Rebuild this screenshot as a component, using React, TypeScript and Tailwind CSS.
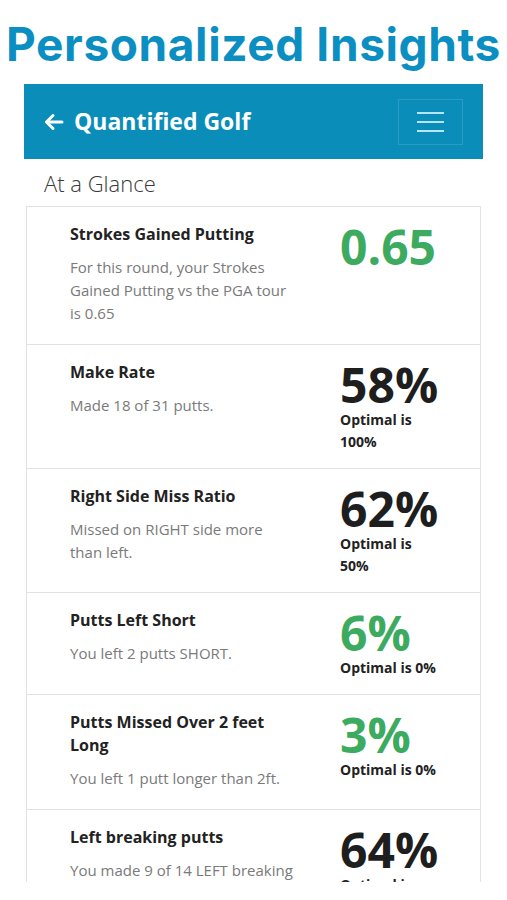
import React from 'react';

interface Insight {
  title: string;
  detail: string;
  value: string;
  good?: boolean;
  optimal?: string;
}

const insights: Insight[] = [
  {
    title: 'Strokes Gained Putting',
    detail: 'For this round, your Strokes Gained Putting vs the PGA tour is 0.65',
    value: '0.65',
    good: true,
  },
  { title: 'Make Rate', detail: 'Made 18 of 31 putts.', value: '58%', optimal: 'Optimal is 100%' },
  {
    title: 'Right Side Miss Ratio',
    detail: 'Missed on RIGHT side more than left.',
    value: '62%',
    optimal: 'Optimal is 50%',
  },
  { title: 'Putts Left Short', detail: 'You left 2 putts SHORT.', value: '6%', good: true, optimal: 'Optimal is 0%' },
  {
    title: 'Putts Missed Over 2 feet Long',
    detail: 'You left 1 putt longer than 2ft.',
    value: '3%',
    good: true,
    optimal: 'Optimal is 0%',
  },
  {
    title: 'Left breaking putts',
    detail: 'You made 9 of 14 LEFT breaking putts.',
    value: '64%',
    optimal: 'Optimal is 50%',
  },
];

const InsightRow: React.FC<{ item: Insight }> = ({ item }) => (
  <div className="flex pl-[43px] pt-4 pb-[15px]">
    <div className="w-[225px] shrink-0">
      <h3 className="text-[16px] leading-[23px] font-bold text-[#222]">{item.title}</h3>
      <p className="mt-[10px] mb-[4px] text-[15px] leading-[23px] text-[#7a7a7a]">{item.detail}</p>
    </div>
    <div className="ml-[45px]">
      <div
        className={`text-[48px] leading-none font-bold ${item.good ? 'text-[#3caa5f]' : 'text-[#1e1e1e]'}`}
      >
        {item.value}
      </div>
      {item.optimal && (
        <p className="w-[100px] text-[14px] leading-[22px] font-bold text-[#222]">{item.optimal}</p>
      )}
    </div>
  </div>
);

export default function App() {
  return (
    <div className="min-h-[900px] bg-white font-['Open_Sans',sans-serif]">
      <h1 className="pt-[21px] mb-[17px] text-center font-['Inter',sans-serif] text-[46px] leading-none font-bold tracking-[0.6px] text-[#0b8fc2]">
        Personalized Insights
      </h1>

      <div className="mx-auto w-[459px]">
        <header className="flex h-[75px] items-center justify-between bg-[#0a8db9] pl-5 pr-5">
          <div className="flex items-center gap-[10px] text-white">
            <svg width="20" height="18" viewBox="0 0 20 18" fill="none" stroke="white" strokeWidth="3" strokeLinecap="round" strokeLinejoin="round">
              <path d="M18 9H3" />
              <path d="M9 2.5L2.5 9L9 15.5" />
            </svg>
            <span className="text-[23px] font-bold leading-none">Quantified Golf</span>
          </div>
          <button className="flex h-[46px] w-[65px] flex-col items-center justify-center gap-[7px] border border-[#2a9cc4]">
            <span className="block h-[2px] w-[27px] bg-[#b5e6f7]" />
            <span className="block h-[2px] w-[27px] bg-[#b5e6f7]" />
            <span className="block h-[2px] w-[27px] bg-[#b5e6f7]" />
          </button>
        </header>

        <div className="h-[723px] overflow-hidden">
          <h2 className="pt-[9px] mb-[8px] pl-5 text-[22px] leading-[30px] font-light text-[#3a3a3a]">At a Glance</h2>
          <div className="mx-[2px] border border-[#e2e2e2] divide-y divide-[#e2e2e2]">
            {insights.map((item) => (
              <InsightRow key={item.title} item={item} />
            ))}
          </div>
        </div>
      </div>
    </div>
  );
}
